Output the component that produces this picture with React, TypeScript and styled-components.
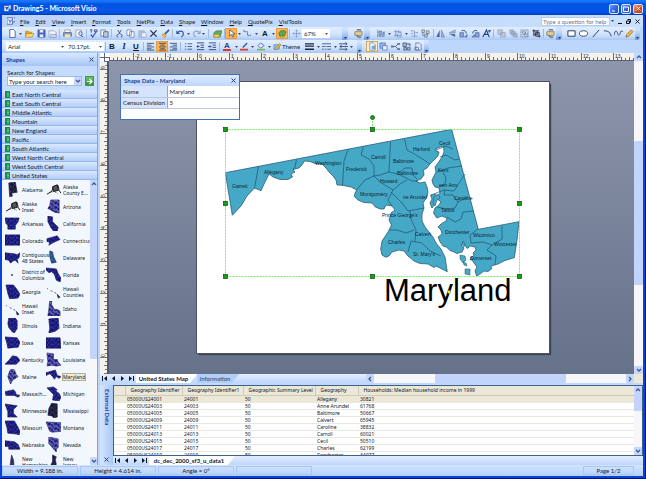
import React from "react";
import styled, { createGlobalStyle, css } from "styled-components";

const UI = `Lato, "Noto Sans", sans-serif`;
const GRID = `"Noto Sans", sans-serif`;
const ARIAL = `"Liberation Sans", Arial, sans-serif`;

const Global = createGlobalStyle`
  html, body, #root { height: 100%; margin: 0; }
  * { box-sizing: border-box; }
  body { font: 6px/7px ${UI}; color: #111827; overflow: hidden; }
  button, input, select { font: inherit; color: inherit; margin: 0; padding: 0; border: 0; background: none; border-radius: 0; }
  button { display: flex; align-items: center; justify-content: center; cursor: pointer; }
  svg { display: block; flex: none; }
  h1, h2, p { margin: 0; font: inherit; }
`;

/* ---------- frame ---------- */
const Window = styled.div`
  display: flex;
  flex-direction: column;
  height: 100vh;
  background: #0842d8;
  padding: 0 3px 3px 2px;
  box-shadow: inset -1px -1px 0 #00128c;
`;
const TitleBar = styled.header`
  display: flex;
  align-items: center;
  flex: none;
  height: 15px;
  margin: 0 -3px 0 -2px;
  padding: 2px 3px 0 4px;
  gap: 2px;
  color: #fff;
  background: linear-gradient(#1c78fb 0, #1170f6 2px, #0352e0 4px, #0457ea 10px, #0450dd 13px, #0038b8 15px);
`;
const TitleText = styled.h1`
  flex: 1;
  font-weight: 700;
  font-size: 7px;
  white-space: nowrap;
`;
const Caption = styled.button<{ $close?: boolean }>`
  width: 10px;
  height: 10px;
  border: 1px solid #dce8ff;
  border-radius: 2px;
  background: ${(p) => (p.$close ? "linear-gradient(135deg,#f09a7c,#dd4a24 60%,#c23a14)" : "linear-gradient(135deg,#6b97f5,#2a5fe0 60%,#2355d0)")};
`;
const MenuBar = styled.nav`
  display: flex;
  align-items: center;
  flex: none;
  height: 12px;
  padding: 0 3px 0 5px;
  gap: 6px;
  background: linear-gradient(90deg, #bcd4fa, #c8dffd);
`;
const MenuIcon = styled.span`
  margin-right: -1px;
`;
const MenuButton = styled.button`
  display: block;
  white-space: nowrap;
  &::first-letter { text-decoration: underline; }
`;
const Ask = styled.input`
  width: 69px;
  height: 9px;
  margin-left: auto;
  padding: 0 1px;
  background: #fff;
  border: 1px solid #b3cdf5;
  &::placeholder { color: #6f7480; opacity: 1; }
`;
const MdiButtons = styled.div`
  display: flex;
  gap: 4px;
  align-items: center;
  margin-left: -5px;
`;
const ToolRow = styled.div`
  display: flex;
  flex: none;
  height: 13px;
  overflow: hidden;
  background: #bcd6fc;
`;
const Toolbar = styled.div`
  display: flex;
  align-items: center;
  flex: none;
  height: 13px;
  padding-left: 4px;
  border-radius: 0 3px 3px 0;
  background: linear-gradient(#e2eefe, #cfe2fd 60%, #a9c7f4);
`;
const ToolButton = styled.button<{ $w: number; $on?: boolean; $pale?: boolean }>`
  flex: none;
  width: ${(p) => p.$w}px;
  height: 11px;
  ${(p) => p.$on && css`background: #fdb45a; box-shadow: inset 0 0 0 1px #e89a3c;`}
  ${(p) => p.$pale && css`background: #fdf0c4; box-shadow: inset 0 0 0 1px #c9a86a;`}
`;
const Sep = styled.span<{ $w: number }>`
  flex: none;
  width: ${(p) => p.$w}px;
  height: 9px;
  background: linear-gradient(#9db9e8, #9db9e8) center / 1px 100% no-repeat;
`;
const Overflow = styled.button<{ $w: number }>`
  flex: none;
  width: ${(p) => p.$w}px;
  height: 13px;
  align-items: flex-end;
  padding-bottom: 1px;
  border-radius: 0 3px 3px 0;
  background: linear-gradient(#cfe1fd 20%, #a9c6f5 60%, #6c95dc);
`;
const Combo = styled.div<{ $w: number }>`
  display: flex;
  align-items: center;
  justify-content: space-between;
  flex: none;
  width: ${(p) => p.$w}px;
  height: 9px;
  padding: 0 2px;
  background: #fff;
`;
const ComboInput = styled.input`
  width: 100%;
  min-width: 0;
`;

/* ---------- body ---------- */
const Body = styled.div`
  display: grid;
  grid-template-columns: 96px minmax(0, 1fr);
  column-gap: 2px;
  flex: 1;
  min-height: 0;
  background: #bcd5fb;
`;
const Panel = styled.aside`
  display: flex;
  flex-direction: column;
  min-height: 0;
  background: #c0d8fd;
  border-right: 1px solid #84a5dc;
`;
const PanelHead = styled.div`
  display: flex;
  align-items: center;
  justify-content: space-between;
  flex: none;
  height: 13px;
  padding: 0 3px 0 4px;
  font-weight: 700;
  color: #14418f;
  background: linear-gradient(#d8e7fe, #a5c5f6);
`;
const Search = styled.form`
  flex: none;
  height: 24px;
  padding: 3px 3px 0 5px;
  background: #c6dcfe;
`;
const SearchRow = styled.div`
  display: flex;
  align-items: center;
  gap: 3px;
`;
const SearchBox = styled.div`
  display: flex;
  align-items: center;
  width: 75px;
  height: 10px;
  padding-left: 1px;
  background: #fff;
  border: 1px solid #9cb9e8;
`;
const Drop = styled.button`
  flex: none;
  width: 7px;
  height: 8px;
  background: #c5d7fb;
`;
const Go = styled.button`
  width: 9px;
  height: 10px;
  background: linear-gradient(#6fc36b, #2e9134);
  border: 1px solid #3f9a42;
`;
const Stencil = styled.button`
  flex: none;
  justify-content: flex-start;
  height: 9px;
  padding-left: 3px;
  gap: 2px;
  white-space: nowrap;
  background: linear-gradient(#d9e8fe, #b3cef8);
  border-bottom: 1px solid #97b7ea;
`;
const Library = styled.div`
  display: flex;
  flex: 1;
  min-height: 0;
`;
const ShapeGrid = styled.div`
  display: grid;
  grid-template-columns: 41px 1fr;
  grid-auto-rows: 17px;
  align-content: start;
  flex: 1;
  min-width: 0;
  overflow: hidden;
  padding: 1px 0 0 3px;
  background: #f2f7fe;
`;
const ShapeItem = styled.button`
  justify-content: flex-start;
  gap: 2px;
  min-width: 0;
  line-height: 6px;
  text-align: left;
`;
const ShapeName = styled.span<{ $on?: boolean }>`
  font-size: 5px;
  font-family: ${GRID};
  white-space: pre;
  ${(p) => p.$on && css`background: #ece9d8; outline: 1px solid #b5ae92;`}
`;

/* ---------- scroll bars ---------- */
const Scroll = styled.div<{ $row?: boolean; $size: number }>`
  display: flex;
  flex-direction: ${(p) => (p.$row ? "row" : "column")};
  flex: none;
  ${(p) => (p.$row ? `height: ${p.$size}px;` : `width: ${p.$size}px;`)}
  background: #f7f7f9;
`;
const ScrollEnd = styled.button<{ $row?: boolean }>`
  flex: none;
  width: ${(p) => (p.$row ? "8px" : "100%")};
  height: ${(p) => (p.$row ? "100%" : "8px")};
  background: #c5d6fc;
  border-radius: 1px;
`;
const Track = styled.div<{ $row?: boolean }>`
  display: flex;
  flex-direction: ${(p) => (p.$row ? "row" : "column")};
  flex: 1;
  min-height: 0;
`;
const Gap = styled.span<{ $n: number }>`flex: ${(p) => p.$n} 1 0;`;
const Thumb = styled.span<{ $n: number }>`
  flex: ${(p) => p.$n} 1 0;
  background: #c3d4fc;
  border-radius: 1px;
`;

/* ---------- drawing ---------- */
const Work = styled.main`
  display: flex;
  flex-direction: column;
  min-width: 0;
  min-height: 0;
`;
const DrawArea = styled.section`
  display: grid;
  grid-template-columns: 9px minmax(0, 1fr) 9px;
  grid-template-rows: 8px minmax(0, 1fr);
  flex: 1;
  min-height: 0;
  overflow: hidden;
`;
const RulerBox = styled.div<{ $side?: boolean }>`
  overflow: hidden;
  background: #f4f2ea;
  ${(p) => (p.$side ? "border-right: 2px solid #4e5870; grid-row: 2; grid-column: 1;" : "border-bottom: 1px solid #55607a; grid-column: 2;")}
`;
const Corner = styled.div`
  background: linear-gradient(#5a6680,#5a6680) center/1px 100% no-repeat, linear-gradient(#5a6680,#5a6680) center/100% 1px no-repeat, #fff;
`;
const VScrollCell = styled.div`
  display: flex;
  grid-column: 3;
  grid-row: 1 / 3;
`;
const Canvas = styled.div`
  position: relative;
  display: flex;
  align-items: center;
  justify-content: center;
  overflow: hidden;
  padding-left: 3px;
  background: linear-gradient(#8d96ab, #66718a);
`;
const Sheet = styled.div`
  flex: none;
  background: #fff;
  box-shadow: 0 0 0 1px #4a5264, 2px 2px 1px #3c4558;
`;
const DataWindow = styled.section`
  position: absolute;
  left: 11px;
  top: 13px;
  width: 120px;
  height: 46px;
  background: #fff;
  border: 1px solid #426fb5;
`;
const DataHead = styled.div`
  display: flex;
  align-items: center;
  justify-content: space-between;
  height: 11px;
  padding: 0 3px;
  font-weight: 700;
  color: #1a4590;
  background: linear-gradient(#dce9fe, #c0d7fb);
`;
const DataTable = styled.table`
  width: 100%;
  border-collapse: collapse;
  table-layout: fixed;
  th, td { height: 11px; padding: 0 2px; text-align: left; font-weight: 400; white-space: nowrap; border-bottom: 1px solid #b8c8e4; }
  th { width: 46px; background: #d5e4fc; border-right: 1px solid #8ba7d4; }
`;

/* ---------- tabs and data ---------- */
const TabRow = styled.div`
  display: flex;
  align-items: center;
  flex: none;
  height: 9px;
  background: linear-gradient(#e3eefe, #bdd6fb);
`;
const NavButton = styled.button`
  width: 9px;
  height: 9px;
`;
const Tab = styled.button<{ $on?: boolean; $w: number }>`
  flex: none;
  width: ${(p) => p.$w}px;
  height: 9px;
  padding-right: 6px;
  white-space: nowrap;
  clip-path: polygon(0 0, 100% 0, calc(100% - 7px) 100%, 0 100%);
  ${(p) => (p.$on ? css`font-weight: 700; background: #fff;` : css`color: #23406e; background: #b4cdf6;`)}
`;
const HScrollCell = styled.div`
  flex: none;
  width: 51%;
  margin-left: auto;
  padding-right: 9px;
  background: #ece9d8;
`;
const Filler = styled.span`
  flex: 1;
`;
const External = styled.section`
  display: grid;
  grid-template-columns: 13px minmax(0, 1fr);
  flex: none;
  height: 82px;
  padding-top: 2px;
  background: #bfd8fd;
`;
const SideTitle = styled.div`
  display: flex;
  flex-direction: column;
  align-items: center;
  justify-content: space-between;
  padding: 4px 0 3px;
  color: #1a4590;
  font-weight: 700;
  background: linear-gradient(90deg, #d6e6fe, #a9c8f7);
`;
const SideText = styled.h2`
  writing-mode: vertical-rl;
  font-weight: 700;
  line-height: 8px;
`;
const GridColumn = styled.div`
  display: flex;
  flex-direction: column;
  min-width: 0;
`;
const GridFrame = styled.div`
  display: flex;
  height: 71px;
  flex: none;
  background: #fff;
  border: 1px solid #40608e;
`;
const GridClip = styled.div`
  flex: 1;
  min-width: 0;
  overflow: hidden;
`;
const DataGrid = styled.table`
  width: 100%;
  border-collapse: collapse;
  table-layout: fixed;
  font: 5px/6px ${GRID};
  th { height: 9px; padding: 0 5px; text-align: left; font-weight: 400; white-space: nowrap; background: #ebe8d9; border-right: 1px solid #cfcab5; border-bottom: 1px solid #cfcab5; }
  th:last-child { border-right: 0; }
  td { height: 7px; padding: 0 2px; white-space: nowrap; border-bottom: 1px solid #e9e7e0; }
  tbody tr:first-child td { background: #ece8d8; }
`;
const Status = styled.footer`
  display: flex;
  align-items: center;
  flex: none;
  height: 11px;
  gap: 2px;
  padding-right: 9px;
  background: linear-gradient(#d2e4fe, #b4d0fa);
`;
const Cell = styled.div<{ $w: number }>`
  width: ${(p) => p.$w}px;
  height: 9px;
  line-height: 8px;
  text-align: center;
  border: 1px solid #a9c7f4;
`;

/* ---------- icons, each on a 10 x 10 field ---------- */
const N = "#24427e";
const G = "#8fa3c6";
const icons: Record<string, React.ReactNode> = {
  new: <path d="M2 .5h4l2 2v7H2z" fill="#fff" stroke={N} strokeWidth=".8" />,
  open: <><path d="M0 2h4l1 1h3v6H0z" fill="#d9a32c" /><path d="M2 5h8L8 9H0z" fill="#ffd86b" stroke="#8a6414" strokeWidth=".5" /></>,
  save: <><path d="M1 1h8v8H1z" fill="#4a69c4" stroke="#253f8d" strokeWidth=".6" /><path d="M3 1h4v3H3zM3 6h4v3H3z" fill="#e8eefb" /></>,
  mail: <><path d="M1 2h6l2 2v5H1z" fill="#eef3fc" stroke="#7283aa" strokeWidth=".6" /><path d="M3 6h6v3H3zM3 6l3 2 3-2" fill="#fff" stroke="#7283aa" strokeWidth=".6" /></>,
  print: <><path d="M2 1h6v3H2z" fill="#fff" stroke="#59698c" strokeWidth=".6" /><path d="M.5 4h9v4h-9z" fill="#8e9dbd" stroke="#3f4f74" strokeWidth=".6" /><path d="M2 6h6v3H2z" fill="#f5e7a6" /></>,
  preview: <><path d="M1 1h6v8H1z" fill="#fff" stroke="#6b7ea8" strokeWidth=".7" /><circle cx="6" cy="5" r="2" fill="#d7e7fc" stroke={N} strokeWidth=".8" /><path d="m7 7 2 2" stroke={N} /></>,
  spell: <><path d="M1 1h3M2.500 1v3M6 1h3v2H6z" stroke={N} strokeWidth=".9" fill="none" /><path d="m2 6 2 3 4-6" stroke="#2e57c8" strokeWidth="1.300" fill="none" /></>,
  research: <><path d="M1 1h5v7H1z" fill="#fff" stroke="#53658f" strokeWidth=".8" /><path d="M4 3h5v6H4z" fill="#b9cbe9" stroke={N} strokeWidth=".7" /></>,
  cut: <path d="M3 1l3 5M7 1 4 6M3.500 9a1.300 1.300 0 1 1 .1-3M6.500 9a1.300 1.300 0 1 0-.1-3" stroke={N} fill="none" strokeWidth=".9" />,
  copy: <path d="M1 1h5v6H1zM4 3h5v6H4z" fill="#fff" stroke="#6178ac" strokeWidth=".8" />,
  paste: <><path d="M1 2h6v7H1z" fill="#b6c0d4" stroke={G} strokeWidth=".7" /><path d="M4 4h5v5H4z" fill="#f0f3f9" stroke={G} strokeWidth=".7" /></>,
  x: <path d="m1.500 1.500 7 7m0-7-7 7" stroke="#222f52" strokeWidth="1.400" />,
  brush: <><path d="m9 1-5 5" stroke="#3a57a8" strokeWidth="1.800" /><path d="m1 6 3-1 2 2-2 3z" fill="#f3bc3e" stroke="#a57817" strokeWidth=".5" /></>,
  undo: <path d="M1 2v3h3M1.500 4.500C4 1 9 2 8 6c0 1-1 2-2 3" stroke="#2b50b0" fill="none" strokeWidth="1.300" />,
  redo: <path d="M9 2v3H6M8.500 4.500C6 1 1 2 2 6c0 1 1 2 2 3" stroke={G} fill="none" strokeWidth="1.300" />,
  shapes: <><path d="M1 4 4 2h6L8 9H1z" fill="#5fae5a" stroke="#34733a" strokeWidth=".6" /><path d="M1 6h6v3H1z" fill="#f4d35e" stroke="#8e741c" strokeWidth=".5" /></>,
  pointer: <path d="M3 1v7l2-2 1.500 3 1-.5L6.300 5.500H9z" fill="#fff" stroke="#333" strokeWidth=".7" />,
  connector: <path d="M1 1v2h4v4h4" stroke="#4465a9" fill="none" strokeDasharray="2 .5" />,
  stamp: <><path d="M1 5c1-4 6-4 8-2L7 8H2z" fill="#5ea94e" stroke="#37682e" strokeWidth=".7" /><path d="M2 8h5v1.500H2z" fill="#b7a13c" /></>,
  pan: <path d="M5 1v8M1 5h8M3.500 2.500 5 1l1.500 1.500M3.500 7.500 5 9l1.500-1.500M2.500 3.500 1 5l1.500 1.500M7.500 3.500 9 5 7.500 6.500" stroke="#7190cc" fill="#fff" strokeWidth=".8" />,
  props: <><path d="M1 3h8v4H1z" fill="#e3d49a" stroke="#70623a" strokeWidth=".7" /><path d="M3 1h5M3 7l2 2h3" stroke="#5a6478" strokeWidth="1.200" fill="none" /></>,
  align: <path d="M2 1v8M3.500 2.500h3v2h-3zM3.500 6h4l1.500-3v5H3.500z" stroke="#40619e" fill="#b7cdf2" strokeWidth=".8" />,
  distribute: <path d="M1 3h8M1 7h8M3 1v8M6 1v3h3v5H5V5" stroke="#6e8bc4" fill="none" strokeWidth=".8" />,
  link: <path d="M1 2h3M5 2v6M2 8h6M6 4h3M1 5h2" stroke="#8496b8" fill="none" />,
  layout: <path d="M1 1h3v3H1zM6 2h3v3H6zM4 6h3v3H4zM2 4v3h2M7 5v2" stroke="#5d6f9a" fill="#e7d699" strokeWidth=".8" />,
  flipH: <><path d="M4 1v8H.500z" fill="#4a5f92" /><path d="M6 1v8h3.500z" fill="#9fb3dc" stroke="#4a5f92" strokeWidth=".5" /></>,
  flipV: <><path d="M8 1v3.500H1z" fill="#9fb3dc" stroke="#5b6f9f" strokeWidth=".5" /><path d="M8 9V5.500H1z" fill="#5b6f9f" /></>,
  rotL: <><path d="M1 4h4v5H1zM6 9l3-3v3z" fill="#8ba2d2" stroke="#3d5792" strokeWidth=".6" /><path d="M3 2c3-1 5 0 5 3" stroke={N} fill="none" /></>,
  rotR: <><path d="M5 4h4v5H5zM1 9l3-3v3z" fill="#8ba2d2" stroke="#3d5792" strokeWidth=".6" /><path d="M7 2C4 1 2 2 2 5" stroke={N} fill="none" /></>,
  rotA: <path d="M1 9 5 1l3 8M3 6h4M8 1v3M7 2h3" stroke={N} fill="none" strokeWidth="1.200" />,
  stackA: <path d="M1 1h5v5H1zM4 4h5v5H4z" fill="#c3cbd9" stroke="#8f9ab2" strokeWidth=".8" />,
  stackB: <path d="M1 1h4v4H1zM5 5h4v4H5zM3 3h4v4H3z" fill="#b4bfd2" stroke="#8f9ab2" strokeWidth=".8" />,
  group: <path d="M1 1h8v8H1zM3 3h3v3H3zM5 5h3v3H5z" fill="#c9d6ed" stroke="#6d7d9d" strokeWidth=".8" strokeDasharray="2 .6" />,
  ungroup: <path d="M2 2h4v4H2zM4 4h4v4H4zM.5 2h2M2 .5v2M7.500 8h2M8 7.500v2M6 2h2M2 6v2" fill="#aab6cf" stroke="#2a3348" strokeWidth="1" />,
  rect: <path d="M1 2h8v6H1z" fill="#fff" stroke="#1e2e55" />,
  oval: <ellipse cx="5" cy="5" rx="4.500" ry="3" fill="#fff" stroke="#1e2e55" strokeWidth=".9" />,
  line: <path d="m2 9 7-8" stroke="#1e2e55" />,
  arc: <path d="M1 2c4 0 7 1 8 6" stroke="#1e2e55" fill="none" />,
  free: <path d="M0 7c1-6 3-6 4-2s3 1 3-1 2-2 3-1" stroke="#1e2e55" fill="none" strokeWidth=".9" />,
  pencil: <path d="m1 9 1-3 5-5 2 2-5 5z" fill="#f6b93b" stroke="#7b5414" strokeWidth=".7" />,
  left: <path d="M1 1.500h8M1 3.500h5M1 5.500h8M1 7.500h5M1 9h8" stroke="#2b3e6b" strokeWidth=".9" />,
  center: <path d="M1 1.500h8M2.500 3.500h5M1 5.500h8M2.500 7.500h5M1 9h8" stroke="#2b3e6b" strokeWidth=".9" />,
  right: <path d="M1 1.500h8M4 3.500h5M1 5.500h8M4 7.500h5M1 9h8" stroke="#2b3e6b" strokeWidth=".9" />,
  bullets: <path d="M1 2h1.500M4 2h5M1 5h1.500M4 5h5M1 8h1.500M4 8h5" stroke="#3b5796" />,
  indentL: <path d="M1 1h8M5 3.500h4M5 6h4M1 8.500h8M4 5H1m1.500-1.500L1 5l1.500 1.500" stroke="#2b4385" fill="none" />,
  indentR: <path d="M1 1h8M5 3.500h4M5 6h4M1 8.500h8M0 5h3M2 3.500 3.500 5 2 6.500" stroke="#2b4385" fill="none" />,
  lineColor: <><path d="m3 6 5-5" stroke="#3457ad" strokeWidth="1.500" /><path d="M0 7.500h9v2H0z" fill="#e23b2e" /></>,
  fill: <><path d="m4 1 4 3-4 3-3-3z" fill="#dbe9fb" stroke="#35539b" strokeWidth=".8" /><path d="M0 7.500h9v2H0z" fill="#79b86d" /></>,
  theme: <><path d="M1 3h6v5H1z" fill="#9cc4f4" stroke="#4a6cab" strokeWidth=".6" /><path d="m3 9 6-6-2-1-5 5z" fill="#f1bb4e" stroke="#7b5414" strokeWidth=".5" /></>,
  weight: <path d="M0 2h10M0 4.500h10M0 8h10" stroke="#1a2440" strokeWidth="1.500" />,
  pattern: <path d="M0 2h10M0 5h4m1 0h5M0 8h2m1 0h2m1 0h4" stroke="#485f91" />,
  ends: <path d="M0 2h9M7 .5 9 2 7 3.500M1 5h9M3 3.500 1 5l2 1.500M0 8h9M7 6.500 9 8 7 9.500" stroke="#2f4473" fill="none" strokeWidth=".9" />,
  dataA: <><path d="M2 1h4l2 2v6H2z" fill="#fff" stroke="#5370a8" strokeWidth=".8" /><path d="M4 4h4v4H4z" fill="#7da3e0" /></>,
  dataB: <><path d="M1 1h6v6H1z" fill="#8fb5ee" stroke="#3f65ab" strokeWidth=".7" /><path d="M4 4h5v5H4z" fill="#e7effb" stroke="#3f65ab" strokeWidth=".7" /></>,
  dataC: <><path d="M2 5h3l3-3M5 5l3 3" stroke="#4a5f8f" fill="none" /><path d="M0 4h3v2H0zM7 1h3v2H7zM7 7h3v2H7z" fill="#5f7299" /></>,
  dataD: <path d="M1 1h4v4H1zM5 2h4v3M2 6h3v3H2zM6 6h3v3H6z" fill="#9fb0d0" stroke="#44557e" strokeWidth=".8" />,
  dataE: <path d="M2 1h4l2 2v6H2zM1 6h4v3H1z" fill="#e2eaf8" stroke="#526ba0" strokeWidth=".8" />,
  visio: <path d="M0 1h7v8H0zM2 3l2 4 2-4M7 0h3v6H7" fill="#fff" stroke="#2f54a8" strokeWidth="1" />,
};
const Icon = ({ n, s = 9 }: { n: string; s?: number }) => (
  <svg width={s} height={s} viewBox="0 0 10 10" aria-hidden="true">{icons[n]}</svg>
);
const Caret = () => <svg width="3" height="2" viewBox="0 0 4 2"><path d="M0 0h4L2 2z" fill="#10182c" /></svg>;
const Chevron = ({ dir }: { dir: "up" | "down" | "left" | "right" }) => {
  const d = { up: "M1 4l2-2 2 2", down: "M1 2l2 2 2-2", left: "M4 1 2 3l2 2", right: "M2 1l2 2-2 2" }[dir];
  return <svg width="6" height="6" viewBox="0 0 6 6"><path d={d} stroke="#3e5a95" strokeWidth="1.300" fill="none" /></svg>;
};
const Cross = ({ c = "#1a3566" }: { c?: string }) => (
  <svg width="5" height="5" viewBox="0 0 5 5"><path d="m.5.5 4 4m0-4-4 4" stroke={c} strokeWidth=".9" /></svg>
);
const Nav = ({ k }: { k: number }) => {
  const d = ["M1 1h1v5H1zM6 1v5L3 3.500z", "M5 1v5L2 3.500z", "M2 1v5l3-2.500z", "M1 1v5l3-2.500zM5 1h1v5H5z"][k];
  return <svg width="7" height="7" viewBox="0 0 7 7"><path d={d} fill="#0c1220" /></svg>;
};

type Item = ["i" | "on" | "pale", string, number] | ["c" | "s" | "o" | "g", number] | ["t", string, string, number] | ["combo", string, string, number];
const Spacer = styled.span<{ $w: number }>`flex: none; width: ${(p) => p.$w}px;`;
const Letter = styled.span<{ $k: string }>`
  font: 700 8px/8px ${ARIAL};
  ${(p) => p.$k === "Italic" && css`font-style: italic; font-family: "Liberation Serif", serif;`}
  ${(p) => p.$k === "Underline" && css`text-decoration: underline;`}
  ${(p) => p.$k === "Font color" && css`border-bottom: 2px solid #e0342a; line-height: 7px; color: #2b4385; padding: 0 1px;`}
`;
const Tools = ({ items }: { items: Item[] }) => (
  <Toolbar>
    {items.map((it, k) => {
      if (it[0] === "c") return <ToolButton key={k} $w={it[1]} aria-label="Options"><Caret /></ToolButton>;
      if (it[0] === "s") return <Sep key={k} $w={it[1]} />;
      if (it[0] === "g") return <Spacer key={k} $w={it[1]} />;
      if (it[0] === "o") return <Overflow key={k} $w={it[1]} aria-label="More buttons"><Caret /></Overflow>;
      if (it[0] === "t") return <ToolButton key={k} $w={it[3]} aria-label={it[2]}><Letter $k={it[2]}>{it[1]}</Letter></ToolButton>;
      if (it[0] === "combo") return <Combo key={k} $w={it[3]}><ComboInput aria-label={it[2]} defaultValue={it[1]} /><Caret /></Combo>;
      return <ToolButton key={k} $w={it[2]} $on={it[0] === "on"} $pale={it[0] === "pale"} aria-label={it[1]}><Icon n={it[1]} /></ToolButton>;
    })}
  </Toolbar>
);

const standard: Item[] = [
  ["i", "new", 12], ["c", 5], ["i", "open", 12], ["i", "save", 12], ["i", "mail", 11], ["s", 3], ["i", "print", 12], ["i", "preview", 12], ["s", 2],
  ["i", "spell", 12], ["i", "research", 11], ["s", 3], ["i", "cut", 12], ["i", "copy", 11], ["i", "paste", 12], ["i", "x", 11], ["i", "brush", 12], ["s", 3],
  ["i", "undo", 12], ["c", 5], ["i", "redo", 10], ["c", 5], ["s", 5], ["i", "shapes", 12], ["s", 2], ["on", "pointer", 12], ["c", 5], ["i", "connector", 11],
  ["c", 6], ["t", "A", "Text", 12], ["c", 5], ["on", "stamp", 12], ["s", 3], ["i", "pan", 11], ["combo", "67%", "Zoom", 28], ["g", 12], ["o", 6],
];
const picture: Item[] = [["i", "props", 12], ["o", 6]];
const action: Item[] = [
  ["i", "align", 12], ["c", 6], ["i", "distribute", 11], ["c", 6], ["i", "link", 11], ["i", "layout", 11], ["s", 4], ["i", "flipH", 11], ["i", "flipV", 12],
  ["i", "rotL", 11], ["i", "rotR", 12], ["i", "rotA", 11], ["s", 3], ["i", "stackA", 12], ["i", "stackB", 12], ["i", "group", 11], ["i", "ungroup", 12], ["s", 2],
  ["i", "props", 12], ["o", 6],
];
const draw: Item[] = [["i", "rect", 11], ["i", "oval", 12], ["i", "line", 12], ["i", "arc", 12], ["i", "free", 11], ["i", "pencil", 11], ["o", 5]];
const format: Item[] = [
  ["combo", "Arial", "Font", 60], ["combo", "70.17pt.", "Font size", 38], ["s", 2], ["t", "B", "Bold", 12], ["t", "I", "Italic", 12], ["t", "U", "Underline", 12], ["s", 3],
  ["i", "left", 11], ["on", "center", 12], ["i", "right", 11], ["s", 3], ["i", "bullets", 12], ["i", "indentL", 12], ["i", "indentR", 12], ["s", 2],
  ["t", "A", "Font color", 14], ["c", 4], ["i", "lineColor", 12], ["c", 5], ["i", "fill", 12], ["c", 5], ["i", "theme", 10],
];
const format2: Item[] = [["i", "weight", 11], ["c", 6], ["i", "pattern", 11], ["c", 6], ["i", "ends", 11], ["c", 5], ["g", 3], ["o", 5]];
const dataBar: Item[] = [["pale", "dataA", 12], ["i", "dataB", 11], ["i", "dataC", 12], ["i", "dataD", 11], ["i", "dataE", 12], ["o", 5]];
const ThemeButton = styled.button`
  flex: none;
  width: 18px;
  height: 13px;
  background: linear-gradient(#e2eefe, #cfe2fd 60%, #a9c7f4);
`;

/* ---------- state thumbnails, each on a 16 x 16 field ---------- */
const states: [string, string, string?][] = [
  ["Alabama", "M4 1l7-1 2 11-6 1 1 3-3 1z", "#181830"],
  ["Alaska\nCounty E...", "AK"],
  ["Alaska\nInset", "AK"],
  ["Arizona", "M5 1h9v14l-5-1-7-4 2-3z", "light"],
  ["Arkansas", "M0 2h15l-1 4-3 4v4H3V10L1 8z"],
  ["California", "M2 0l5 1v5l6 6-1 4H8L5 12 2 6z"],
  ["Colorado", "M0 2h16v11H0z"],
  ["Connecticut", "M1 6l11-3 3 4-7 3-5 3 1-3-3-1z"],
  ["Contiguous\n48 States", "M0 3l10 1 3 1 3-2-1 5-2 2 1 4-3-3-3 1-2 2-2-3-4-1-1-3z"],
  ["Delaware", "M4 1l3 1 1 5 3 6-5 1-2-7z", "#1f5d86"],
  ["District of\nColumbia", "M7 8h1v1H7z"],
  ["Florida", "M0 1l11 1 2 5 3 5-1 4-4-2-2-6-3-3-3 1-3-3z"],
  ["Georgia", "M1 1h8l4 5 3 5-2 4-9 1-2-6z"],
  ["Hawaii\nCounties", "HI"],
  ["Hawaii\nInset", "HI"],
  ["Idaho", "M4 0h2v4l3 5h3l3 2v5H2l1-7z", "light"],
  ["Illinois", "M4 0h7l2 3v8l-3 5-2-1-4-5-1-4z"],
  ["Indiana", "M3 1l10-1 1 11-4 3-7 2 1-5z"],
  ["Iowa", "M0 2l13 1 3 5-2 5-11 1-1-5z"],
  ["Kansas", "M0 3h15l1 11H0z"],
  ["Kentucky", "M0 13l4-4 4-5 5 1 3 4-4 4z"],
  ["Louisiana", "M1 1l7 1v6h4l1 3 3 3-5 1-5-1-5 1 1-5z", "light"],
  ["Maine", "M3 8l2-6 2-2 3 1 2 5 2 2-6 4-2 4z", "light"],
  ["Maryland", "M0 4l10-3 2 6 4 1-2 2-3-2-2 3-2-3-3-3-4 2z"],
  ["Massach...", "M0 6l9-2 2 2 1 3 4 1-2 2-4-2H1z"],
  ["Michigan", "M1 2l7-1 4 3-2 1 4 3 2 4-2 4-7-1 1-6-4-4z"],
  ["Minnesota", "M0 1l13 2-4 4v4l4 4H3V9z"],
  ["Mississippi", "M6 0l6 1v14l-4 1-1-2-5-1 1-7z", "#181830"],
  ["Missouri", "M0 1h10l3 5 3 6-1 4-3-1-9-1-1-6z"],
  ["Montana", "M0 2l16 1v9l-9 1-3-1-2-5z", "light"],
  ["Nebraska", "M0 4l10 1 4 3 2 5H4V10H0z"],
  ["Nevada", "M3 0l10 2v9l-2 2v3L3 7z", "light"],
  ["New\nHampshire", "M7 1l2 5 1 9H5l1-7z", "#2a2a50"],
  ["New\nJersey", "M7 1l4 2-1 3 1 5-3 5-3-4 2-4z", "#181830"],
];
const stateShape = (d: string, tone?: string) => {
  if (d === "AK") return (
    <g stroke="#151515" fill="none">
      <path d="M1 13l5-3 2-5 5-1 1 5 2 3" /><path d="M7 5l5-2 1 6-5 1z" fill="#555" /><path d="M4 11l5-1 3 2" strokeDasharray="1 1" />
    </g>
  );
  if (d === "HI") return <path d="M1 5h1M5 7l2 1M9 9l2 1M12 11l3 3-2 1z" stroke="#33334d" fill="#33334d" strokeWidth=".8" />;
  return (
    <>
      <path d={d} fill={!tone || tone === "light" ? "#15157c" : tone} stroke="#101050" strokeWidth=".6" />
      <path d={d} fill={tone === "light" ? "url(#countiesLight)" : "url(#counties)"} />
    </>
  );
};

/* ---------- rulers ---------- */
const HRuler = () => (
  <svg width="1600" height="7">
    {Array.from({ length: 400 }, (_, k) => {
      const major = (k - 6) % 8 === 0;
      return <path key={k} d={`M${k * 4}.5 ${major ? 0 : k % 2 ? 5 : 4}V7`} stroke="#6b6b68" strokeWidth="1" />;
    })}
    {Array.from({ length: 16 }, (_, k) => <text key={k} x={26 + k * 32} y="5" fontSize="5" fontFamily={ARIAL} fill="#222">{k - 2}</text>)}
  </svg>
);
const VRuler = () => (
  <svg width="7" height="1200">
    {Array.from({ length: 300 }, (_, k) => <path key={k} d={`M${(k - 2) % 8 === 0 ? 0 : k % 2 ? 5 : 4} ${k * 4}.5H7`} stroke="#77756f" strokeWidth="1" />)}
    {Array.from({ length: 10 }, (_, k) => (
      <text key={k} transform={`translate(5 ${8 + k * 32}) rotate(-90)`} fontSize="5" fontFamily={ARIAL} fill="#222">{9 - k}</text>
    ))}
  </svg>
);

/* ---------- Maryland ---------- */
const outline =
  "M225.300 172.700 451.700 129.300 478.300 229.300 519 221.700 517 240 514.300 257.700 505 260.500 498 264 491 266 491.500 269 488 271.500 484 271 480 274 476.700 276 475 271 477 267 474 263 472 260 470 259.500 471 257 474 256 473 253 476 250 475 247 470.500 246 467 248.500 465 245 462 243 461.500 246 464 248 462 252 457 253.500 453.300 251.700 450 250.500 446.700 247.300 443 246 440 241.700 438 237 442 234 441 230 438 227 441 224 446 221 447 218 442 216 436.700 218 433.500 213 435 208 438 206 441 202 437 199 435 204 432 208 430 203 432 199 430.500 195 434 194 438 196 440 193 439 188 435 187 433 184 432 180 434 176 436 172 435 167 438 163 442 157 444 152 443.500 146 440 147 436 148.500 436 151 439 152 438 156 434 160 430 164 427 168 423.500 170 424 175 421 179 416 181 420 183 425 182 427 187 428 192 427 197 423 203 424 208 422 214 422 221 425 227 429 232 433 237 436 243 441 249 445 257 447.300 271.700 440 268 436 266 434 267.500 428 264 420 263.500 414 261 408 256 404 251 399 250 392 252 389 256 385.700 257.300 382 255 380.700 249 382 241 388 232 391.500 225 389 220 391 213 395 210 392 206 386 205 384 209 380 209 375 206.700 372 203 364 202.500 358 200 354.300 196.500 355 193 356.700 190 351 187 342.300 185.300 337 185 336 180 333 176 329 172 326 168 322 164 315 163.500 310 161.500 304.500 161 302 165 299 168 293 169.500 295 172 291 174 292.500 177 288 179.500 280 179.500 273 177 269 174 265 182 261 190.700 257 189 254.300 188.300 247 196 241 206 232.300 215.300Z";
const islands = "M460 255l5 1 1 4-3 3-3-4zM463 262l3 1 1 3-3-1zM465 269h5v6l-5-1zM463 241l2 3-1 3-2-3zM434 197l4-3 2 4-3 2-2 6-2-3z";
const borders =
  "M258.500 166.500 254.500 188M296.500 159.500 295 167 293 170M348 149.500 344 161 342.500 185.500M363.500 146.500 361 155 369 159 374 166 374 176M374 176 365 180 356.500 190M390.500 142 389 172 380 175 374 176M404.500 139 407 150 416 155 424 160 430 164M389 172 398 174 412 181 418 181M400 172 405 168 412 168 413 175 417 179M374 176 380 182 393 190 388 200 392 206M393 190 400 184 407 180M391 192 402 203 408 211 424 208M410 211 411 219 416 230 415 241M390 230 397 230 406 233 414 230M411 241 408 252M411 241 422 243 430 251 441 256M436 150 446 146 453 149M440 157 446 155 455 160 459 159M437 172 448 168 462 166M439 187 445 184 446 178 443 172M434 194 444 190 454 191 465 174M445 190 444 195 453 195 458 202 455 208 447 209 437 207M458 202 468 197M447 217 455 222 461 219 463 212 474 211M478 229 470 235 471 243M471 243 483 242 492 245 502 239 502 226M492 245 487 250 496 256 495 265";
const counties: [string, number, number][] = [
  ["Garrett", 232, 188], ["Allegany", 264, 174], ["Washington", 315, 165], ["Frederick", 346, 171], ["Carroll", 371, 159], ["Harford", 413, 151], ["Cecil", 439, 145],
  ["Baltimore", 393, 163], ["Baltimore", 397, 175], ["Howard", 380, 183], ["Montgomery", 360, 196], ["Kent", 438, 172], ["een Ann", 439, 187], ["ne Arundel", 403, 199],
  ["Caroline", 454, 200], ["Talbot", 441, 212], ["Prince George's", 382, 217], ["Dorchester", 445, 234], ["Calvert", 415, 236], ["Wicomico", 473, 237],
  ["Charles", 388, 244], ["Worcester", 494, 246], ["St. Mary's", 413, 256], ["Somerset", 470, 260],
];
const handles = [[225, 129], [372, 129], [519, 129], [225, 203], [519, 203], [225, 276], [372, 276], [519, 276]];
const Drawing = () => (
  <svg width="352" height="271" viewBox="197 82 352 271">
    <path d={outline} fill="#45a8c6" stroke="#1d4e6c" strokeWidth=".7" />
    <path d={islands} fill="#45a8c6" stroke="#1d4e6c" strokeWidth=".5" />
    <path d={borders} fill="none" stroke="#1d5274" strokeWidth=".7" strokeLinejoin="round" />
    <g fontFamily={ARIAL} fontSize="5" fill="#0c2530">
      {counties.map(([t, x, y]) => <text key={t + y} x={x} y={y}>{t}</text>)}
    </g>
    <text x="384" y="301" fontFamily={ARIAL} fontSize="31" fill="#000">Maryland</text>
    <path d="M225.500 129.500h294v147h-294zM372.500 118v11" fill="none" stroke="#7cea68" strokeDasharray="2 1" />
    <g fill="#12a012" stroke="#064d06" strokeWidth=".7">
      {handles.map(([x, y]) => <rect key={`${x}-${y}`} x={x - 1.5} y={y - 1.5} width="4" height="4" />)}
      <circle cx="372.500" cy="117.500" r="2" />
    </g>
    <path d="m449 290 2 2-2 2-2-2z" fill="#e8e337" stroke="#77771b" strokeWidth=".4" />
  </svg>
);

const rows = [
  ["05000US24001", "24001", "50", "Allegany", "30821"], ["05000US24003", "24003", "50", "Anne Arundel", "61768"], ["05000US24005", "24005", "50", "Baltimore", "50667"],
  ["05000US24009", "24009", "50", "Calvert", "65945"], ["05000US24011", "24011", "50", "Caroline", "38832"], ["05000US24013", "24013", "50", "Carroll", "60021"],
  ["05000US24015", "24015", "50", "Cecil", "50510"], ["05000US24017", "24017", "50", "Charles", "62199"], ["05000US24019", "24019", "50", "Dorchester", "34077"],
];
const menus = ["File", "Edit", "View", "Insert", "Format", "Tools", "NetPix", "Data", "Shape", "Window", "Help", "QuotePix", "VisiTools"];
const stencils = ["East North Central", "East South Central", "Middle Atlantic", "Mountain", "New England", "Pacific", "South Atlantic", "West North Central", "West South Central", "United States"];
const columns = ["Geography Identifier", "Geography Identifier1", "Geographic Summary Level", "Geography", "Households: Median household income in 1999"];

const VScroll = ({ size, parts }: { size: number; parts: [number, number, number] }) => (
  <Scroll $size={size}>
    <ScrollEnd aria-label="Scroll up"><Chevron dir="up" /></ScrollEnd>
    <Track><Gap $n={parts[0]} /><Thumb $n={parts[1]} /><Gap $n={parts[2]} /></Track>
    <ScrollEnd aria-label="Scroll down"><Chevron dir="down" /></ScrollEnd>
  </Scroll>
);
const NavSet = () => <>{["First", "Previous", "Next", "Last"].map((l, k) => <NavButton key={l} aria-label={l}><Nav k={k} /></NavButton>)}</>;

export default function App() {
  return (
    <Window>
      <Global />
      <TitleBar>
        <Icon n="visio" s={7} />
        <TitleText>Drawing5 - Microsoft Visio</TitleText>
        <Caption aria-label="Minimize"><svg width="6" height="6"><path d="M1 5h3" stroke="#fff" strokeWidth="1" /></svg></Caption>
        <Caption aria-label="Maximize"><svg width="6" height="6"><path d="M.5 1h5v4.500h-5z" stroke="#fff" fill="none" /></svg></Caption>
        <Caption $close aria-label="Close"><Cross c="#fff" /></Caption>
      </TitleBar>
      <MenuBar>
        <MenuIcon><Icon n="visio" s={8} /></MenuIcon>
        {menus.map((m) => <MenuButton key={m}>{m}</MenuButton>)}
        <Ask aria-label="Help" placeholder="Type a question for help" />
        <MdiButtons>
          <Caret />
          <button aria-label="Minimize document"><svg width="4" height="5"><path d="M0 4.500h4" stroke="#111" /></svg></button>
          <button aria-label="Restore document"><svg width="5" height="5"><path d="M1.500.500h3v3M.5 2h3v2.500h-3z" stroke="#111" fill="none" /></svg></button>
          <button aria-label="Close document"><Cross c="#111" /></button>
        </MdiButtons>
      </MenuBar>
      <ToolRow>
        <Tools items={standard} /><Tools items={picture} /><Tools items={action} /><Tools items={draw} />
      </ToolRow>
      <ToolRow>
        <Tools items={format} />
        <ThemeButton>Theme</ThemeButton>
        <Tools items={format2} /><Tools items={dataBar} />
      </ToolRow>
      <Body>
        <Panel>
          <PanelHead><h2>Shapes</h2><button aria-label="Close shapes"><Cross /></button></PanelHead>
          <Search onSubmit={(e) => e.preventDefault()}>
            <label htmlFor="search">Search for Shapes:</label>
            <SearchRow>
              <SearchBox><ComboInput id="search" defaultValue="Type your search here" /><Drop type="button" aria-label="Recent searches"><Chevron dir="down" /></Drop></SearchBox>
              <Go aria-label="Search"><svg width="7" height="7"><path d="M1 3.500h5M3.500 1 6 3.500 3.500 6" stroke="#fff" fill="none" strokeWidth="1.200" /></svg></Go>
            </SearchRow>
          </Search>
          {stencils.map((s) => (
            <Stencil key={s}><svg width="5" height="7"><path d="M0 0h5v7H0z" fill="#119047" /><path d="M2 2h2M2 3.500h2M2 5h2" stroke="#9be0b2" strokeWidth=".7" /></svg>{s}</Stencil>
          ))}
          <Library>
            <ShapeGrid>
              {states.map(([name, d, tone], k) => (
                <ShapeItem key={name}>
                  <svg width="15" height="15" viewBox="0 0 16 16">
                    {k === 0 && (
                      <defs>
                        <pattern id="counties" width="7" height="5" patternUnits="userSpaceOnUse"><path d="M1 1h1M4 2v1M2 4h1M5.500 4.500h1M6 0v1" stroke="#7373bd" strokeWidth=".8" /></pattern>
                        <pattern id="countiesLight" width="7" height="5" patternUnits="userSpaceOnUse"><path d="M0 1h2l1 2M4 0v2h2M5 4l2-1M1 3v2" fill="none" stroke="#a9a9dc" strokeWidth=".9" /></pattern>
                      </defs>
                    )}
                    {stateShape(d, tone)}
                  </svg>
                  <ShapeName $on={name === "Maryland"}>{name}</ShapeName>
                </ShapeItem>
              ))}
            </ShapeGrid>
            <VScroll size={7} parts={[0, 165, 95]} />
          </Library>
        </Panel>
        <Work>
          <DrawArea>
            <Corner />
            <RulerBox><HRuler /></RulerBox>
            <VScrollCell><VScroll size={9} parts={[79, 144, 80]} /></VScrollCell>
            <RulerBox $side><VRuler /></RulerBox>
            <Canvas>
              <Sheet><Drawing /></Sheet>
              <DataWindow>
                <DataHead><h2>Shape Data - Maryland</h2><button aria-label="Close shape data"><Cross /></button></DataHead>
                <DataTable>
                  <tbody>
                    <tr><th scope="row">Name</th><td>Maryland</td></tr>
                    <tr><th scope="row">Census Division</th><td>5</td></tr>
                  </tbody>
                </DataTable>
              </DataWindow>
            </Canvas>
          </DrawArea>
          <TabRow>
            <NavSet />
            <Tab $on $w={61}>United States Map</Tab>
            <Tab $w={42}>Information</Tab>
            <HScrollCell>
              <Scroll $row $size={9}>
                <ScrollEnd $row aria-label="Scroll left"><Chevron dir="left" /></ScrollEnd>
                <Track $row><Gap $n={61} /><Thumb $n={131} /><Gap $n={60} /></Track>
                <ScrollEnd $row aria-label="Scroll right"><Chevron dir="right" /></ScrollEnd>
              </Scroll>
            </HScrollCell>
          </TabRow>
          <External>
            <SideTitle><SideText>External Data</SideText><button aria-label="Close external data"><Cross /></button></SideTitle>
            <GridColumn>
              <GridFrame>
                <GridClip>
                  <DataGrid>
                    <colgroup><col width="11" /><col width="57" /><col width="61" /><col width="72" /><col width="43" /><col /></colgroup>
                    <thead><tr><th aria-label="Row" />{columns.map((c) => <th key={c} scope="col">{c}</th>)}</tr></thead>
                    <tbody>{rows.map((r) => <tr key={r[0]}><td />{r.map((v, k) => <td key={k}>{v}</td>)}</tr>)}</tbody>
                  </DataGrid>
                </GridClip>
                <VScroll size={8} parts={[0, 17, 36]} />
              </GridFrame>
              <TabRow><NavSet /><Tab $on $w={86}>dc_dec_2000_sf3_u_data1</Tab></TabRow>
            </GridColumn>
          </External>
        </Work>
      </Body>
      <Status>
        <Cell $w={76}>Width = 9.188 in.</Cell>
        <Cell $w={76}>Height = 4.614 in.</Cell>
        <Cell $w={76}>Angle = 0°</Cell>
        <Cell $w={76} />
        <Filler />
        <Cell $w={51}>Page 1/2</Cell>
      </Status>
    </Window>
  );
}
